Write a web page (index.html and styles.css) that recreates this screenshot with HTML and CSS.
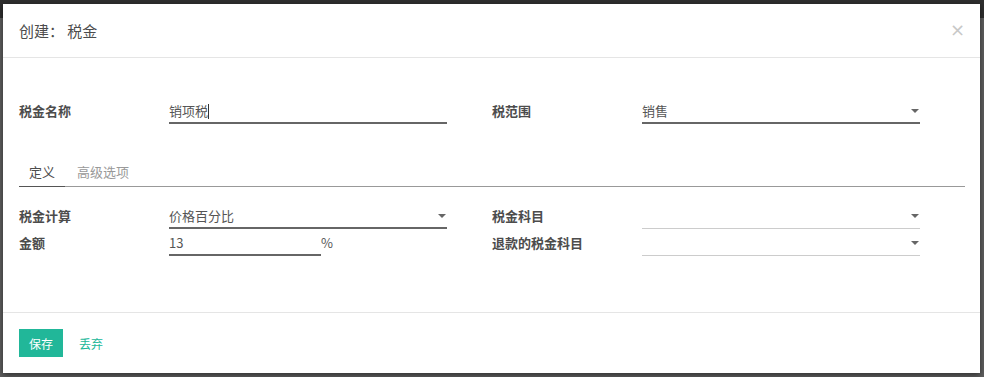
FILE: index.html
```html
<!DOCTYPE html>
<html lang="zh-CN">
<head>
    <meta charset="UTF-8">
    <meta name="viewport" content="width=device-width, initial-scale=1.0">
    <title>创建： 税金</title>
    <link rel="stylesheet" href="styles.css">
</head>
<body>

    <div class="modal">
        <div class="modal-header">
            <h4>创建： 税金</h4>
            <span class="close">×</span>
        </div>

        <div class="modal-body">
            <div class="group top-group">
                <div class="field-row">
                    <label>税金名称</label>
                    <div class="field active">销项税<span class="caret-line"></span></div>
                </div>
                <div class="field-row">
                    <label>税范围</label>
                    <div class="field active select">销售<span class="arrow"></span></div>
                </div>
            </div>

            <ul class="tabs">
                <li class="tab current">定义</li>
                <li class="tab">高级选项</li>
            </ul>

            <div class="group">
                <div class="col">
                    <div class="field-row">
                        <label>税金计算</label>
                        <div class="field active select">价格百分比<span class="arrow"></span></div>
                    </div>
                    <div class="field-row">
                        <label>金额</label>
                        <div class="amount">
                            <div class="field active short">13</div>
                            <span class="unit">%</span>
                        </div>
                    </div>
                </div>
                <div class="col">
                    <div class="field-row">
                        <label>税金科目</label>
                        <div class="field empty select"><span class="arrow"></span></div>
                    </div>
                    <div class="field-row">
                        <label>退款的税金科目</label>
                        <div class="field empty select"><span class="arrow"></span></div>
                    </div>
                </div>
            </div>
        </div>

        <div class="modal-footer">
            <button class="btn-save">保存</button>
            <a class="btn-discard">丢弃</a>
        </div>
    </div>

</body>
</html>
```

FILE: styles.css
```css
body{
    margin: 0;
    padding: 4px 4px 4px 3px;
    height: 377px;
    box-sizing: border-box;
    background: linear-gradient(#2e2e2e 0, #2e2e2e 18px, #5e5e5e 18px);
    font-family: "Noto Sans CJK SC", "Noto Sans", sans-serif;
    font-size: 13px;
    color: #4c4c4c;
    overflow: hidden;
}
.modal{
    background: #fff;
    height: 369px;
    display: flex;
    flex-direction: column;
    box-shadow: 0 2px 6px rgba(0, 0, 0, 0.5);
}
.modal-header{
    height: 53px;
    border-bottom: 1px solid #e5e5e5;
    display: flex;
    align-items: center;
    justify-content: space-between;
    padding: 0 15px 0 16px;
}
.modal-header h4{
    margin: 0;
    font-size: 15px;
    font-weight: 400;
    color: #4c4c4c;
}
.close{
    font-family: "DejaVu Sans", sans-serif;
    font-size: 18px;
    color: #c8c8c8;
    margin-top: -3px;
}

.modal-body{
    flex: 1;
    padding: 0 15px 0 16px;
}
.group{
    display: grid;
    grid-template-columns: 1fr 1fr;
}
.top-group{
    margin-top: 43px;
}
.col{
    display: flex;
    flex-direction: column;
    gap: 4px;
}
.field-row{
    display: grid;
    grid-template-columns: 150px 278px;
    align-items: end;
}
.field-row label{
    font-weight: 700;
    line-height: 20px;
    padding-bottom: 3px;
}
.field{
    position: relative;
    line-height: 20px;
    padding-bottom: 1px;
    color: #555;
    height: 20px;
}
.field.active{
    border-bottom: 2px solid #666;
}
.field.empty{
    border-bottom: 1px solid #ccc;
    padding-bottom: 2px;
}
.caret-line{
    display: inline-block;
    width: 1px;
    height: 15px;
    background: #333;
    vertical-align: -3px;
}
.arrow{
    position: absolute;
    right: 1px;
    top: 8px;
    border-left: 4px solid transparent;
    border-right: 4px solid transparent;
    border-top: 4px solid #666;
}
.amount{
    display: flex;
    align-items: flex-end;
}
.field.short{
    width: 152px;
}
.unit{
    line-height: 20px;
    padding-bottom: 3px;
    color: #555;
}

.tabs{
    list-style: none;
    margin: 38px 0 0;
    padding: 0;
    display: flex;
    gap: 2px;
    border-bottom: 1px solid #999;
}
.tab{
    padding: 0 10px 4px;
    line-height: 20px;
    color: #999;
    margin-bottom: -1px;
    border-bottom: 1px solid transparent;
}
.tab.current{
    color: #4c4c4c;
    border-bottom-color: #555;
}
.tabs + .group{
    margin-top: 19px;
}

.modal-footer{
    border-top: 1px solid #e5e5e5;
    padding: 16px;
    display: flex;
    align-items: center;
    gap: 16px;
}
.btn-save{
    background: #21b799;
    color: #fff;
    border: 0;
    height: 28px;
    padding: 0 10px;
    font-family: inherit;
    font-size: 12px;
}
.btn-discard{
    color: #21b799;
    font-size: 12px;
}
```
